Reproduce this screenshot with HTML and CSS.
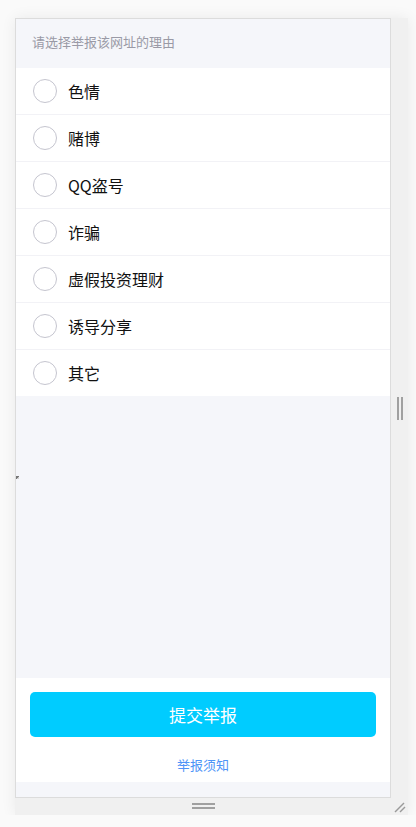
FILE: index.html
```html
<!DOCTYPE html>
<html lang="zh-CN">
<head>
<meta charset="utf-8">
<title>举报</title>
<link rel="stylesheet" href="styles.css">
</head>
<body>
<div class="stage">
  <div class="device">
    <div class="viewport">
      <span class="mark"></span>
      <div class="header">请选择举报该网址的理由</div>
      <ul class="list">
        <li class="row"><span class="radio"></span><span class="label">色情</span></li>
        <li class="row"><span class="radio"></span><span class="label">赌博</span></li>
        <li class="row"><span class="radio"></span><span class="label">QQ盗号</span></li>
        <li class="row"><span class="radio"></span><span class="label">诈骗</span></li>
        <li class="row"><span class="radio"></span><span class="label">虚假投资理财</span></li>
        <li class="row"><span class="radio"></span><span class="label">诱导分享</span></li>
        <li class="row"><span class="radio"></span><span class="label">其它</span></li>
      </ul>
      <div class="spacer"></div>
      <div class="footer">
        <button class="submit">提交举报</button>
        <a class="notice" href="#">举报须知</a>
      </div>
    </div>
    <div class="side">
      <span class="vhandle"></span>
    </div>
    <div class="bottom">
      <span class="hhandle"></span>
    </div>
    <div class="corner">
      <svg width="17" height="17" viewBox="0 0 17 17">
        <line x1="4" y1="14" x2="13" y2="5" stroke="#9a9a9a" stroke-width="1.4"/>
        <line x1="9" y1="14" x2="14" y2="9" stroke="#9a9a9a" stroke-width="1.4"/>
      </svg>
    </div>
  </div>
</div>
</body>
</html>
```

FILE: styles.css
```css
* { box-sizing: border-box; }
html, body {
  margin: 0;
  padding: 0;
  background: #fafafa;
  font-family: "Noto Sans CJK SC", "Noto Sans", sans-serif;
}
.stage {
  padding: 18px 0 0 15px;
}
.device {
  display: grid;
  grid-template-columns: 376px 17px;
  grid-template-rows: 780px 17px;
  width: 393px;
  box-shadow: 0 0 14px rgba(0, 0, 0, 0.07);
}
.viewport {
  position: relative;
  border: 1px solid #dcdcdc;
  background: #f5f6fa;
  display: flex;
  flex-direction: column;
  padding-bottom: 15px;
  overflow: hidden;
}
.mark {
  position: absolute;
  left: 0;
  top: 457px;
  width: 3px;
  height: 3px;
  background: linear-gradient(135deg, #777 50%, #cfcfcf 50%);
}
.header {
  height: 49px;
  padding-left: 16px;
  padding-bottom: 4px;
  display: flex;
  align-items: center;
  font-size: 13px;
  color: #9a9aa6;
}
.list {
  list-style: none;
  margin: 0;
  padding: 0;
  background: #fff;
}
.row {
  height: 47px;
  display: flex;
  align-items: center;
  padding-left: 17px;
  border-bottom: 1px solid #f2f2f6;
}
.row:last-child {
  height: 46px;
  border-bottom: none;
}
.radio {
  width: 24px;
  height: 24px;
  border: 1px solid #c5c5cf;
  border-radius: 50%;
  flex: none;
}
.label {
  margin-left: 11px;
  font-size: 16px;
  color: #111;
  line-height: 1;
}
.spacer {
  flex: 1;
}
.footer {
  height: 104px;
  background: #fff;
  padding: 14px 14px 0;
  display: flex;
  flex-direction: column;
  align-items: center;
}
.submit {
  width: 100%;
  height: 45px;
  border: none;
  border-radius: 5px;
  background: #00ccff;
  color: #fff;
  font-family: inherit;
  font-size: 17px;
  padding: 0;
}
.notice {
  margin-top: 19px;
  line-height: 18px;
  font-size: 13px;
  color: #4d94f7;
  text-decoration: none;
}
.side {
  background: #f0f0f0;
  display: flex;
  align-items: center;
  padding-left: 6px;
}
.vhandle {
  width: 6px;
  height: 23px;
  border-left: 2px solid #a0a0a0;
  border-right: 2px solid #a0a0a0;
}
.bottom {
  background: #f0f0f0;
  display: flex;
  justify-content: center;
  padding-top: 5px;
}
.hhandle {
  width: 23px;
  height: 6px;
  border-top: 2px solid #a0a0a0;
  border-bottom: 2px solid #a0a0a0;
}
.corner {
  background: #f0f0f0;
}
.corner svg { display: block; }
```
